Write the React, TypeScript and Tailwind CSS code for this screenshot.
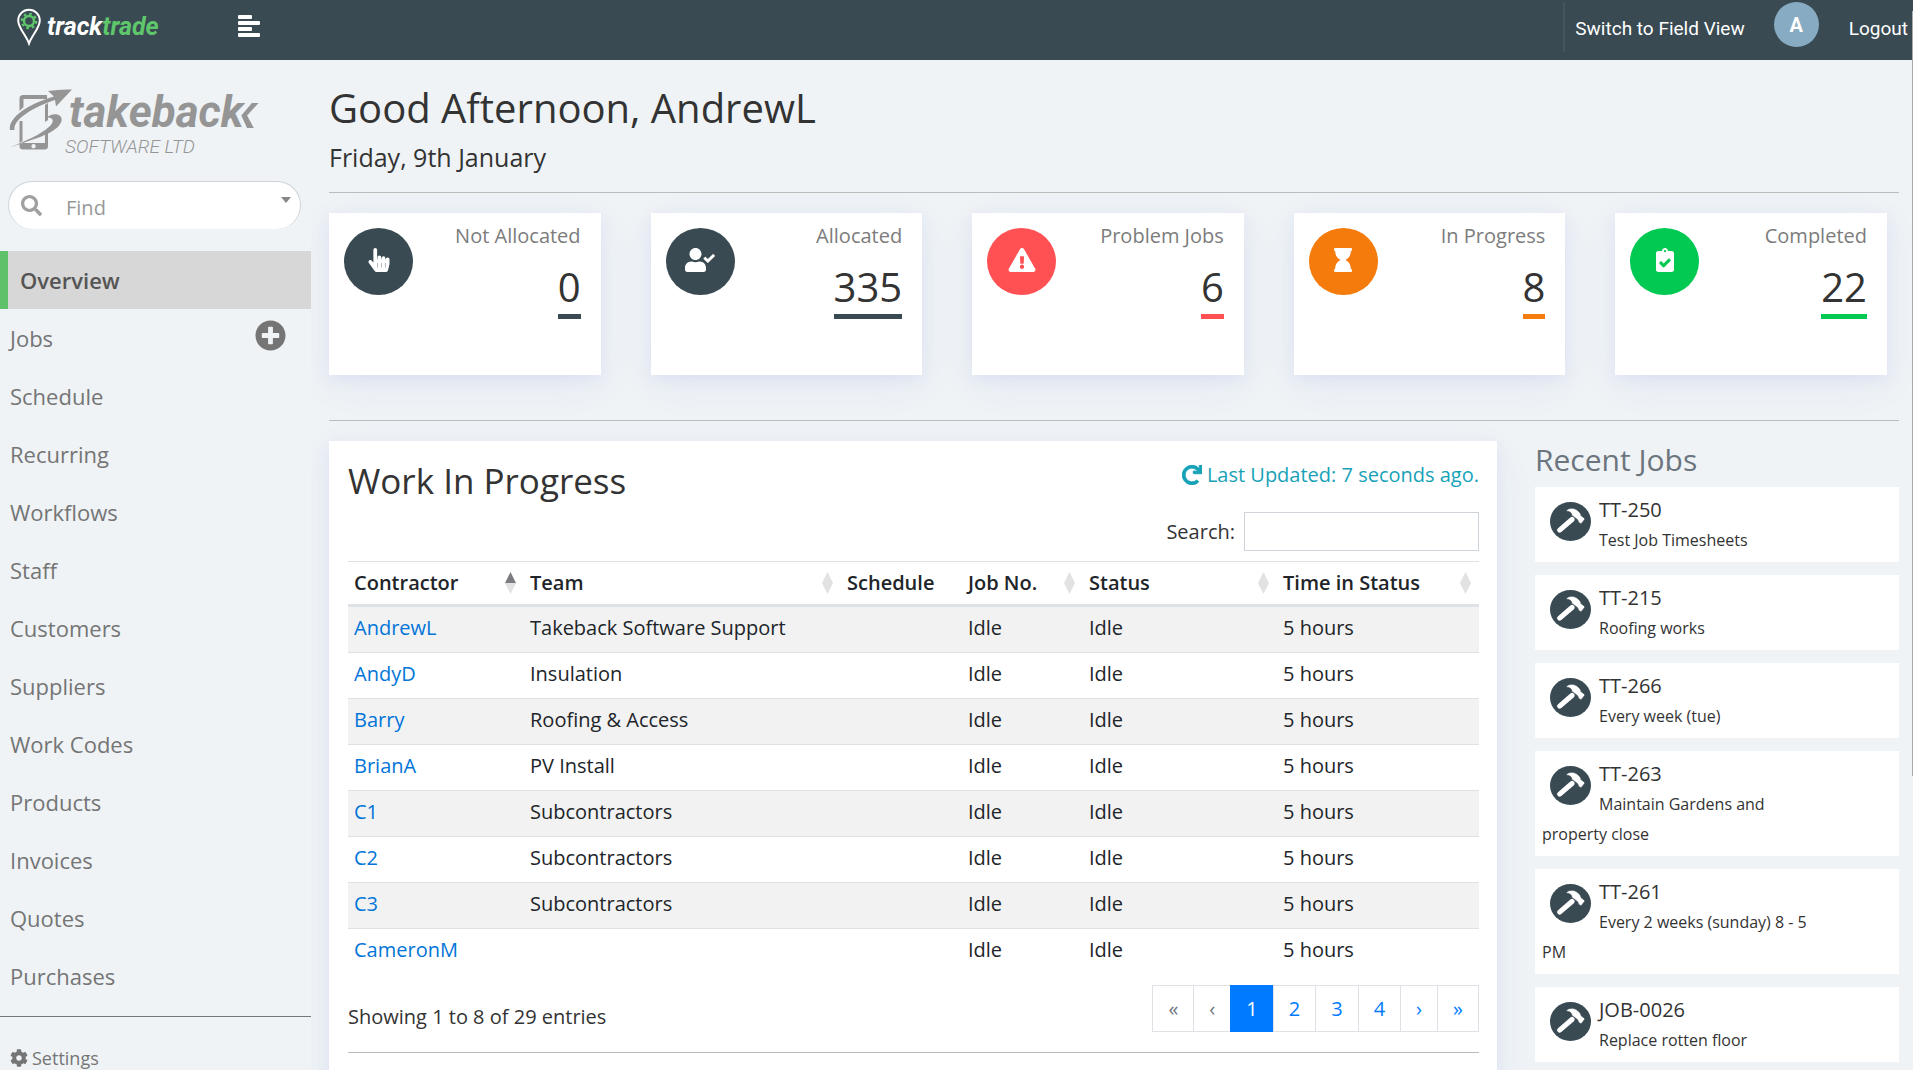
import React, { useState } from "react";
import {
  FaClipboardCheck,
  FaCog,
  FaExclamationTriangle,
  FaHandPointer,
  FaHourglass,
  FaPlusCircle,
  FaRedo,
  FaSearch,
  FaUserCheck,
} from "react-icons/fa";
import clsx from "clsx";

const navItems = [
  "Overview",
  "Jobs",
  "Schedule",
  "Recurring",
  "Workflows",
  "Staff",
  "Customers",
  "Suppliers",
  "Work Codes",
  "Products",
  "Invoices",
  "Quotes",
  "Purchases",
];

const stats = [
  { label: "Not Allocated", value: 0, icon: FaHandPointer, bg: "bg-[#394a52]", border: "border-[#394a52]" },
  { label: "Allocated", value: 335, icon: FaUserCheck, bg: "bg-[#394a52]", border: "border-[#394a52]" },
  { label: "Problem Jobs", value: 6, icon: FaExclamationTriangle, bg: "bg-[#ff5153]", border: "border-[#ff5153]" },
  { label: "In Progress", value: 8, icon: FaHourglass, bg: "bg-[#f47b0c]", border: "border-[#f47b0c]" },
  { label: "Completed", value: 22, icon: FaClipboardCheck, bg: "bg-[#02c951]", border: "border-[#02c951]" },
];

const columns = [
  { title: "Contractor", width: "w-[176px]", sort: "asc" },
  { title: "Team", width: "w-[317px]", sort: "both" },
  { title: "Schedule", width: "w-[121px]", sort: "" },
  { title: "Job No.", width: "w-[121px]", sort: "both" },
  { title: "Status", width: "w-[194px]", sort: "both" },
  { title: "Time in Status", width: "w-[202px]", sort: "both" },
];

const contractors = [
  { name: "AndrewL", team: "Takeback Software Support" },
  { name: "AndyD", team: "Insulation" },
  { name: "Barry", team: "Roofing & Access" },
  { name: "BrianA", team: "PV Install" },
  { name: "C1", team: "Subcontractors" },
  { name: "C2", team: "Subcontractors" },
  { name: "C3", team: "Subcontractors" },
  { name: "CameronM", team: "" },
];

const recentJobs = [
  { no: "TT-250", text: "Test Job Timesheets" },
  { no: "TT-215", text: "Roofing works" },
  { no: "TT-266", text: "Every week (tue)" },
  { no: "TT-263", text: "Maintain Gardens and property close" },
  { no: "TT-261", text: "Every 2 weeks (sunday) 8 - 5 PM" },
  { no: "JOB-0026", text: "Replace rotten floor" },
];

const pages = ["«", "‹", "1", "2", "3", "4", "›", "»"];

const cardShadow = "shadow-[0_10px_40px_rgba(62,80,180,0.05),0_5px_15px_rgba(62,73,220,0.07)]";

function TrackTradeLogo() {
  return (
    <a href="#" className="flex w-[222px] items-start pl-4 pt-2">
      <svg className="h-[38px] w-[26px]" viewBox="0 0 26 38" fill="none">
        <path d="M13 35.5C10 27 2.2 20 2.2 12.5a10.8 10.8 0 0 1 21.6 0C23.8 20 16 27 13 35.5Z" stroke="#fff" strokeWidth="2" />
        <circle cx="13" cy="13" r="5" stroke="#5fc66c" strokeWidth="2.4" />
        <circle cx="13" cy="13" r="7.2" stroke="#5fc66c" strokeWidth="2.2" strokeDasharray="2.6 3.05" />
      </svg>
      <span className="pl-[5px] font-['Roboto'] text-[25px] leading-[38px] font-bold text-white italic">
        track<span className="text-[#5fc66c]">trade</span>
      </span>
    </a>
  );
}

function TakebackLogo() {
  return (
    <div className="flex h-[68px] shrink-0 pl-[9px] text-[#959595]">
      <svg className="h-[66px] w-[64px] shrink-0" viewBox="0 0 64 66" fill="currentColor">
        <path d="M14 7h24v4H14.5v8l-4 4V10.500Q10.500 7 14 7Z" />
        <path d="M10.500 33h3v20l-3 2ZM36 17l3-2v17l-3 2ZM14 55l22-12 3-3v18q0 3.500-3.500 3.500H14q-3.500 0-3.500-3.500v-2Zm10.500 1a2.200 2.200 0 1 0 .1 0Z" />
        <path d="M14 52l22-12v15H14Z" fill="#eff3f6" />
        <path d="M1 42C-1 31 16 17 45 8.500L39 3Q51 1 63 1.500L47 18.500 46 12C25 19 4 31 5.500 42Z" />
        <path d="M0 60C16 53 33 46 41 38 46 33 44 29 38 29.500 44 24 54 26 52.500 33 49 46 20 52 0 60Z" />
      </svg>
      <div className="-ml-2 flex flex-col">
        <div className="flex pl-1">
          <span className="font-['Roboto'] text-[44px] leading-[48px] font-bold italic">takeback</span>
          <svg className="mt-[15px] -ml-[5px] h-[26px] w-[20px]" viewBox="0 0 20 27" fill="currentColor">
            <path d="M13 0h7L8 13l7 13H8L2 13Z" />
          </svg>
        </div>
        <span className="mt-px font-['Roboto'] text-[19px] leading-5 font-light italic">SOFTWARE LTD</span>
      </div>
    </div>
  );
}

function HammerIcon() {
  return (
    <svg className="h-[25px] w-[28px]" viewBox="0 0 84 75" fill="#fff">
      <path d="M8 66.500 45 34.500" stroke="#fff" strokeWidth="15" strokeLinecap="round" />
      <path d="M27 9C33-1 50-1 60 6 68 12 71 16 73 24L78 27 84 33 72 48 64 42Q64 35 58 32L45 23Q44 10 27 9Z" stroke="#394a52" strokeWidth="2" />
    </svg>
  );
}

function SortIcon({ sort }: { sort: string }) {
  return (
    <svg className="h-[22px] w-[11px]" viewBox="0 0 11 22">
      <path d="M5.500 0 11 11H0Z" fill={sort === "asc" ? "#7b7b80" : "#e2e2e3"} />
      <path d="M0 11h11L5.500 22Z" fill="#e2e2e3" />
    </svg>
  );
}

function Header() {
  return (
    <header className="flex h-[60px] items-start bg-[#394a52] text-white">
      <TrackTradeLogo />
      <button aria-label="Toggle menu" className="mt-[15px] ml-4">
        <svg className="h-[22px] w-[22px]" viewBox="0 0 22 22" fill="#fff">
          <rect width="14" height="4" rx="1" />
          <rect y="6" width="22" height="4" rx="1" />
          <rect y="12" width="14" height="4" rx="1" />
          <rect y="18" width="22" height="4" rx="1" />
        </svg>
      </button>
      <div className="ml-auto flex items-start pt-[2px] pr-[5px] font-['Roboto'] text-[19px]">
        <a href="#" className="h-[50px] border-l-2 border-[#44555e] pt-[2px] pr-[29px] pl-[10px] leading-[50px]">
          Switch to Field View
        </a>
        <span className="flex size-[45px] items-center justify-center rounded-full bg-[#86abc2] text-[20px] font-bold">A</span>
        <a href="#" className="pt-[2px] pl-[30px] leading-[50px]">
          Logout
        </a>
      </div>
    </header>
  );
}

function Sidebar({ active, onSelect }: { active: string; onSelect: (item: string) => void }) {
  return (
    <aside className="relative z-10 flex w-[311px] shrink-0 flex-col bg-[#eff3f6] pt-7 text-[#757575]">
      <TakebackLogo />
      <label className="mr-[10px] ml-2 mt-[25px] flex h-12 shrink-0 items-center rounded-3xl border border-b-0 border-[#ced4da] bg-white pr-[9px] pl-3">
        <FaSearch className="size-[21px] text-[#a0a0a0]" />
        <input
          type="text"
          aria-label="Find"
          placeholder="Find"
          className="ml-6 min-w-0 flex-1 pt-1 text-[20px] outline-none placeholder:text-[#999]"
        />
        <svg className="mb-3 h-[6px] w-[10px]" viewBox="0 0 10 6">
          <path d="M0 0h10L5 6Z" fill="#888" />
        </svg>
      </label>
      <nav className="mt-[22px] flex flex-col">
        {navItems.map((item) => (
          <div key={item} className="flex h-[58px] shrink-0">
            <a
              href="#"
              onClick={() => onSelect(item)}
              className={clsx(
                "flex flex-1 items-center text-[22px]",
                item === active
                  ? "border-l-8 border-[#5fc26a] bg-[#d7d7d7] pl-3 font-semibold text-[#555]"
                  : "pl-[10px]"
              )}
            >
              {item}
            </a>
            {item === "Jobs" && (
              <button aria-label="Add job" className="mr-[25px] pb-[6px]">
                <FaPlusCircle className="size-[31px]" />
              </button>
            )}
          </div>
        ))}
      </nav>
      <hr className="mt-[11px] border-[#777]" />
      <a href="#" className="mt-[27px] flex items-center gap-1 pl-[10px] text-[18px] leading-7">
        <FaCog />
        Settings
      </a>
    </aside>
  );
}

function StatCards() {
  return (
    <div className="mt-5 grid grid-cols-5 gap-[50px] pr-3">
      {stats.map(({ label, value, icon: Icon, bg, border }) => (
        <div key={label} className={clsx("flex h-[162px] items-start justify-between bg-white pt-2 pr-5 pl-[15px]", cardShadow)}>
          <div className={clsx("mt-[7px] flex h-[67px] w-[69px] items-center justify-center rounded-[50%] pb-[3px] text-white", bg)}>
            <Icon className="h-6 w-[30px]" />
          </div>
          <div className="flex flex-col items-end">
            <span className="text-[20px] leading-[30px] text-[#7c7c7c]">{label}</span>
            <span className={clsx("mt-3 border-b-5 pb-[3px] text-[40px] leading-[48px]", border)}>{value}</span>
          </div>
        </div>
      ))}
    </div>
  );
}

function WorkInProgress() {
  return (
    <section className={clsx("bg-white px-[18px] pt-[19px] pb-10 text-[20px] leading-[30px] text-[#212529] lg:pl-[19px]", cardShadow)}>
      <div className="flex items-start justify-between">
        <h2 className="text-[35px] leading-[42px] text-[#333]">Work In Progress</h2>
        <a href="#" className="flex items-center gap-[5px] text-[#17a2b8]">
          <FaRedo stroke="currentColor" strokeWidth={24} />
          Last Updated: 7 seconds ago.
        </a>
      </div>
      <label className="mt-[10px] flex items-center justify-end gap-[9px] text-[#333]">
        Search:
        <input type="search" className="h-[39px] w-[235px] border border-[#ced4da] px-2 outline-none" />
      </label>
      <table className="mt-[10px] w-full table-fixed border-separate border-spacing-0">
        <thead>
          <tr>
            {columns.map((col) => (
              <th
                key={col.title}
                className={clsx("border-t border-b-3 border-t-[#dee2e6] border-b-[#dee2e6] pt-[6px] pr-2 pb-[6px] pl-[6px] text-left font-semibold", col.width)}
              >
                <div className="flex items-center justify-between">
                  {col.title}
                  {col.sort && <SortIcon sort={col.sort} />}
                </div>
              </th>
            ))}
          </tr>
        </thead>
        <tbody className="[&_td]:border-[#dee2e6] [&_td]:px-[6px] [&_td]:pt-[6px] [&_td]:pb-[9px]">
          {contractors.map((c) => (
            <tr key={c.name} className="odd:bg-[#f2f2f2] [&:not(:first-child)>td]:border-t">
              <td>
                <a href="#" className="text-[#0275d8]">{c.name}</a>
              </td>
              <td>{c.team}</td>
              <td></td>
              <td>Idle</td>
              <td>Idle</td>
              <td>5 hours</td>
            </tr>
          ))}
        </tbody>
      </table>
      <div className="mt-[11px] flex items-center justify-between">
        <span className="pt-4 text-[#333]">Showing 1 to 8 of 29 entries</span>
        <ul className="flex">
          {pages.map((p, i) => (
            <li key={p} className="-ml-px">
              <button
                disabled={i < 2}
                className={clsx(
                  "h-[47px] border px-[15px]",
                  p === "1" ? "border-[#007bff] bg-[#007bff] text-white" : "border-[#dee2e6]",
                  i < 2 && "text-[#6c757d]",
                  i > 2 && "text-[#007bff]"
                )}
              >
                {p}
              </button>
            </li>
          ))}
        </ul>
      </div>
      <hr className="mt-5 border-[#b9bbbd]" />
    </section>
  );
}

function RecentJobs() {
  return (
    <section>
      <h3 className="text-[30px] leading-[38px] text-[#6c757d]">Recent Jobs</h3>
      <div className="mt-2 flex flex-col gap-[13px]">
        {recentJobs.map((job) => (
          <article key={job.no} className="bg-white pt-2 pr-20 pb-[7px] pl-[7px] leading-[30px] text-[#333]">
            <span className="float-left mt-[7px] mr-2 ml-2 flex h-[39px] w-[41px] items-center justify-center rounded-[50%] bg-[#394a52] pb-[3px] text-white">
              <HammerIcon />
            </span>
            <h4 className="text-[20px] leading-[30px]">{job.no}</h4>
            <p className="text-[16px] leading-[30px]">{job.text}</p>
          </article>
        ))}
      </div>
    </section>
  );
}

export default function App() {
  const [active, setActive] = useState("Overview");

  return (
    <div className="relative flex h-screen flex-col overflow-hidden bg-[#eff3f6] font-['Open_Sans',sans-serif] text-[#333]">
      <Header />
      <div className="flex min-h-0 flex-1">
        <Sidebar active={active} onSelect={setActive} />
        <main className="min-w-0 flex-1 pt-6 pr-[14px] pl-[18px]">
          <h1 className="text-[40px] leading-[48px]">Good Afternoon, AndrewL</h1>
          <p className="mt-[10px] text-[25px] leading-[30px]">Friday, 9th January</p>
          <hr className="mt-5 border-[#b9bbbd]" />
          <StatCards />
          <hr className="mt-[45px] border-[#b9bbbd]" />
          <div className="mt-5 grid grid-cols-[minmax(0,1fr)_364px] gap-[38px]">
            <WorkInProgress />
            <RecentJobs />
          </div>
        </main>
      </div>
      {/* scrollbar edge */}
      <div className="absolute top-[11px] right-0 h-[765px] w-px bg-[#a5abaf]" />
    </div>
  );
}
